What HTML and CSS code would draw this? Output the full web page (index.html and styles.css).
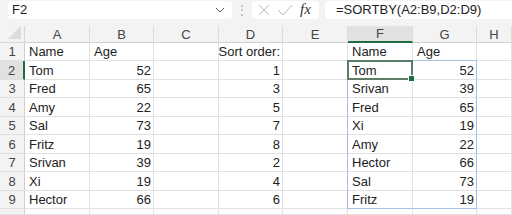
FILE: index.html
```html
<!DOCTYPE html>
<html lang="en">
<head>
    <meta charset="UTF-8">
    <title>SORTBY</title>
    <link rel="stylesheet" href="styles.css">
</head>
<body>
    <div class="formula-bar">
        <div class="name-box">
            <span>F2</span>
            <svg class="chevron" width="10" height="6" viewBox="0 0 10 6"><path d="M1 1 L5 5 L9 1" fill="none" stroke="#555" stroke-width="1"/></svg>
        </div>
        <div class="grip">&#8942;</div>
        <div class="func-box">
            <svg width="14" height="14" viewBox="0 0 14 14"><path d="M2 2 L12 12 M12 2 L2 12" stroke="#b8b8b8" stroke-width="1" fill="none"/></svg>
            <svg width="16" height="14" viewBox="0 0 16 14"><path d="M1 7 L6 12 L15 2" stroke="#b8b8b8" stroke-width="1" fill="none"/></svg>
            <span class="fx">fx</span>
        </div>
        <div class="formula">=SORTBY(A2:B9,D2:D9)</div>
    </div>

    <div class="sheet">
        <div class="corner"><span class="tri"></span></div>
        <div class="col-head">A</div>
        <div class="col-head">B</div>
        <div class="col-head">C</div>
        <div class="col-head">D</div>
        <div class="col-head">E</div>
        <div class="col-head active">F</div>
        <div class="col-head">G</div>
        <div class="col-head">H</div>

        <div class="row-head">1</div>
        <div class="cell">Name</div><div class="cell">Age</div><div class="cell"></div><div class="cell num">Sort order:</div><div class="cell"></div><div class="cell">Name</div><div class="cell">Age</div><div class="cell"></div>

        <div class="row-head active">2</div>
        <div class="cell">Tom</div><div class="cell num">52</div><div class="cell"></div><div class="cell num">1</div><div class="cell"></div><div class="cell">Tom</div><div class="cell num">52</div><div class="cell"></div>

        <div class="row-head">3</div>
        <div class="cell">Fred</div><div class="cell num">65</div><div class="cell"></div><div class="cell num">3</div><div class="cell"></div><div class="cell">Srivan</div><div class="cell num">39</div><div class="cell"></div>

        <div class="row-head">4</div>
        <div class="cell">Amy</div><div class="cell num">22</div><div class="cell"></div><div class="cell num">5</div><div class="cell"></div><div class="cell">Fred</div><div class="cell num">65</div><div class="cell"></div>

        <div class="row-head">5</div>
        <div class="cell">Sal</div><div class="cell num">73</div><div class="cell"></div><div class="cell num">7</div><div class="cell"></div><div class="cell">Xi</div><div class="cell num">19</div><div class="cell"></div>

        <div class="row-head">6</div>
        <div class="cell">Fritz</div><div class="cell num">19</div><div class="cell"></div><div class="cell num">8</div><div class="cell"></div><div class="cell">Amy</div><div class="cell num">22</div><div class="cell"></div>

        <div class="row-head">7</div>
        <div class="cell">Srivan</div><div class="cell num">39</div><div class="cell"></div><div class="cell num">2</div><div class="cell"></div><div class="cell">Hector</div><div class="cell num">66</div><div class="cell"></div>

        <div class="row-head">8</div>
        <div class="cell">Xi</div><div class="cell num">19</div><div class="cell"></div><div class="cell num">4</div><div class="cell"></div><div class="cell">Sal</div><div class="cell num">73</div><div class="cell"></div>

        <div class="row-head">9</div>
        <div class="cell">Hector</div><div class="cell num">66</div><div class="cell"></div><div class="cell num">6</div><div class="cell"></div><div class="cell">Fritz</div><div class="cell num">19</div><div class="cell"></div>

        <div class="row-head"></div>
        <div class="cell"></div><div class="cell"></div><div class="cell"></div><div class="cell"></div><div class="cell"></div><div class="cell"></div><div class="cell"></div><div class="cell"></div>

        <div class="spill"></div>
        <div class="selected"><span class="handle"></span></div>
    </div>
</body>
</html>
```

FILE: styles.css
```css
body {
    margin: 0;
    background-color: #f3f3f3;
    font-family: "Liberation Sans", Arial, sans-serif;
    width: 512px;
    height: 215px;
    overflow: hidden;
}

/* barre de formule */
.formula-bar {
    display: flex;
    align-items: center;
    height: 19px;
    margin-bottom: 7px;
}

.name-box {
    display: flex;
    align-items: center;
    justify-content: space-between;
    box-sizing: border-box;
    margin-left: 8px;
    width: 224px;
    height: 18px;
    padding: 0 7px 0 4px;
    background-color: white;
    border-radius: 4px;
    font-size: 13px;
    color: #222;
}

.grip {
    width: 20px;
    text-align: center;
    color: #b0b0b0;
    font-size: 12px;
}

.func-box {
    display: flex;
    align-items: center;
    gap: 6px;
    box-sizing: border-box;
    width: 67px;
    height: 18px;
    padding-left: 5px;
    background-color: white;
    border-radius: 4px;
}

.fx {
    font-family: "Liberation Serif", serif;
    font-style: italic;
    font-size: 15px;
    color: #333;
    margin-left: 1px;
}

.formula {
    flex: 1;
    box-sizing: border-box;
    height: 18px;
    margin-left: 6px;
    padding-left: 11px;
    background-color: white;
    border-radius: 4px 0 0 4px;
    font-size: 13px;
    line-height: 18px;
    color: #222;
}

/* feuille */
.sheet {
    position: relative;
    display: grid;
    grid-template-columns: 25px 65px 64px 65px 64px 65px 65px 64px 35px;
    grid-template-rows: 17px repeat(9, 18.44px) 6px;
    background-color: white;
    font-size: 13px;
    color: #222;
}

.corner {
    position: relative;
    background-color: #f3f3f3;
    border-right: 1px solid #d8d8d8;
    border-bottom: 1px solid #d8d8d8;
}

.tri {
    position: absolute;
    right: 3px;
    bottom: 3px;
    width: 0;
    height: 0;
    border-left: 13px solid transparent;
    border-bottom: 13px solid #dcdcdc;
}

.col-head {
    background-color: #f3f3f3;
    border-right: 1px solid #dcdcdc;
    border-bottom: 1px solid #d0d0d0;
    text-align: center;
    line-height: 17px;
    color: #444;
}

.col-head.active {
    background-color: #e1e1e1;
    border-bottom: 2px solid #1e6c41;
    line-height: 16px;
}

.row-head {
    background-color: #f3f3f3;
    border-right: 1px solid #d0d0d0;
    border-bottom: 1px solid #e0e0e0;
    color: #444;
    display: flex;
    align-items: flex-end;
    justify-content: center;
    padding-bottom: 1px;
    overflow: hidden;
}

.row-head.active {
    background-color: #e1e1e1;
    border-right: 2px solid #1e6c41;
}

.cell {
    border-right: 1px solid #e1e1e1;
    border-bottom: 1px solid #e1e1e1;
    padding: 0 2px 1px 4px;
    display: flex;
    align-items: flex-end;
    white-space: nowrap;
    min-width: 0;
    overflow: hidden;
}

.cell.num {
    justify-content: flex-end;
}

/* cadres posés par-dessus la grille */
.spill {
    position: absolute;
    grid-column: 7 / 9;
    grid-row: 3 / 11;
    inset: -1px 0 0 -1px;
    border: 1px solid #a7bfe4;
    pointer-events: none;
}

.selected {
    position: absolute;
    grid-column: 7 / 8;
    grid-row: 3 / 4;
    inset: -1px 0 0 -1px;
    border: 2px solid #5e7d67;
    pointer-events: none;
}

.handle {
    position: absolute;
    right: -4px;
    bottom: -4px;
    width: 5px;
    height: 5px;
    background-color: #1e6c41;
    border: 1px solid white;
}
```
